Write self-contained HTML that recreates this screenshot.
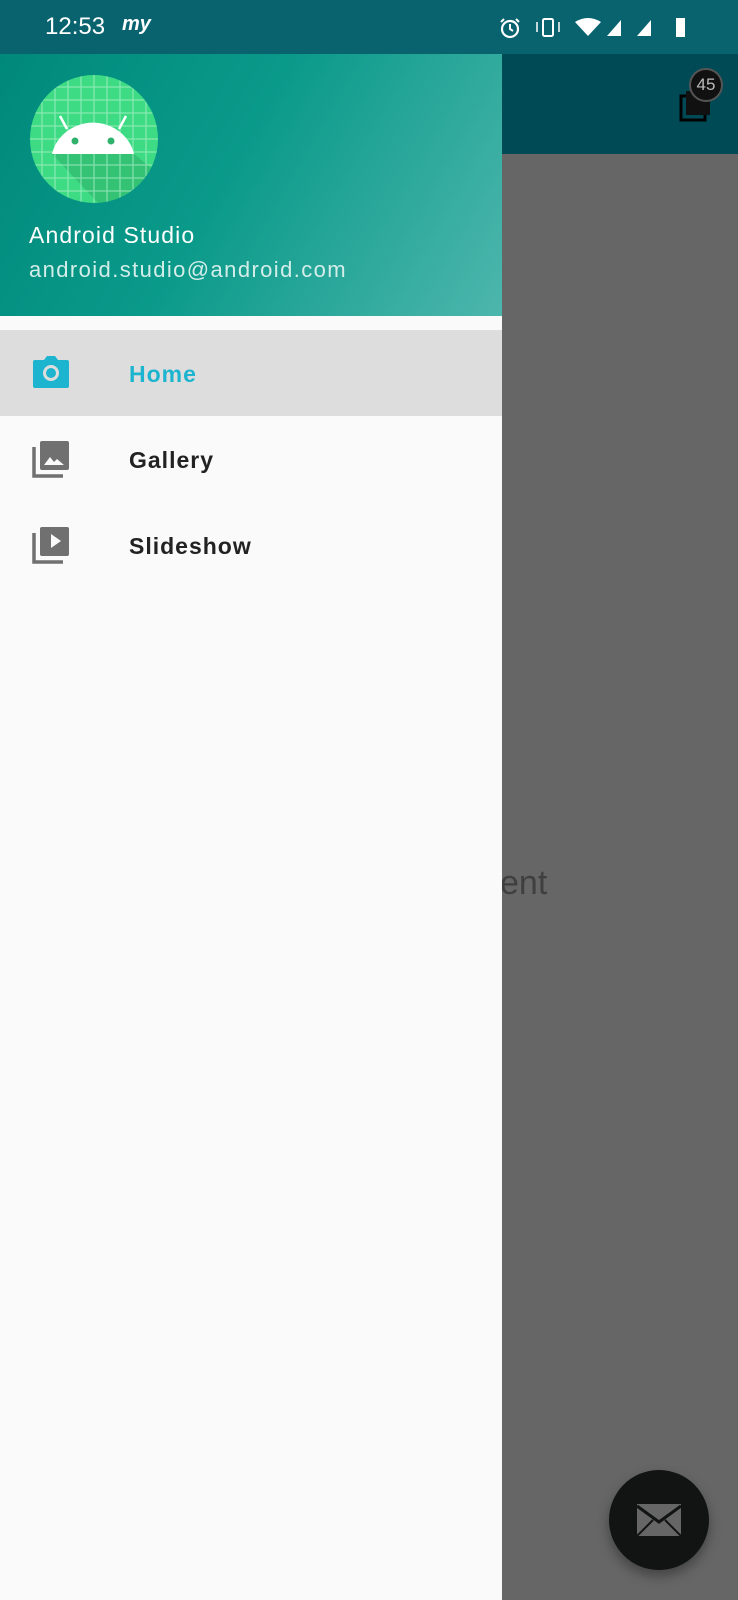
<!DOCTYPE html>
<html><head><meta charset="utf-8"><style>
*{margin:0;padding:0;box-sizing:border-box}
body{width:738px;height:1600px;overflow:hidden;background:#666;font-family:"Liberation Sans",sans-serif;position:relative}
.sb{position:absolute;left:0;top:0;width:738px;height:54px;background:#08636f;color:#fff}
.tb{position:absolute;left:502px;top:54px;width:236px;height:100px;background:#004a55}
.drawer{position:absolute;left:0;top:54px;width:502px;height:1546px;background:#fafafa}
.hd{position:absolute;left:0;top:0;width:502px;height:262px;background:linear-gradient(120deg,#00897b 0%,#0a9a8a 45%,#4db6ac 100%)}
.item{position:absolute;left:0;width:502px;height:86px}
.item span{position:absolute;left:129px;top:31px;font-size:23px;font-weight:bold;color:#222;letter-spacing:1px}
</style></head><body>
<div class="sb">
<div style="position:absolute;left:45px;top:13px;font-size:24px">12:53</div>
<div style="position:absolute;left:122px;top:13px;font-size:20px;font-weight:bold;font-style:italic">my</div>
<svg style="position:absolute;left:495px;top:14px" width="210" height="28" viewBox="0 0 210 28">
<circle cx="15" cy="15" r="8" fill="none" stroke="#fff" stroke-width="2.2"/><path d="M15 10v5l3 2M9 5l-3 3M21 5l3 3" stroke="#fff" stroke-width="2" fill="none"/>
<rect x="48" y="5" width="10" height="17" rx="1.5" fill="none" stroke="#fff" stroke-width="2"/><path d="M42 8v10M64 8v10" stroke="#fff" stroke-width="1.5"/>
<path d="M80 8 Q93 0 106 8 L93 22Z" fill="#fff"/>
<path d="M112 22 L126 22 L126 6Z" fill="#fff"/><path d="M142 22 L156 22 L156 6Z" fill="#fff"/>
<rect x="181" y="4" width="9" height="19" fill="#fff"/>
</svg>
</div>
<div class="tb">
<svg style="position:absolute;left:174px;top:32px" width="40" height="40" viewBox="0 0 40 40"><rect x="5" y="10" width="24" height="24" fill="none" stroke="#000" stroke-width="3"/><rect x="10" y="5" width="24" height="24" fill="#111"/></svg>
<div style="position:absolute;left:187px;top:14px;width:34px;height:34px;border-radius:50%;background:#111;border:2px solid #555;color:#bbb;font-size:17px;text-align:center;line-height:30px">45</div>
</div>
<div style="position:absolute;left:500px;top:864px;font-size:34px;color:#3f3f3f">ent</div>
<div style="position:absolute;left:609px;top:1470px;width:100px;height:100px;border-radius:50%;background:#121414;box-shadow:0 6px 12px rgba(0,0,0,.35)">
<svg style="position:absolute;left:28px;top:34px" width="44" height="32" viewBox="0 0 44 32"><rect width="44" height="32" fill="#666"/><path d="M0 2 L22 18 L44 2" stroke="#121414" stroke-width="3" fill="none"/><path d="M0 32 L16 16 M44 32 L28 16" stroke="#121414" stroke-width="2"/></svg>
</div>
<div class="drawer">
<div class="hd">
<svg style="position:absolute;left:29px;top:20px" width="130" height="130" viewBox="0 0 130 130">
<defs><clipPath id="c"><circle cx="65" cy="65" r="64"/></clipPath></defs>
<circle cx="65" cy="65" r="64" fill="#3ddc84"/>
<g clip-path="url(#c)"><path d="M23 80 L70 130 L130 130 L130 100 L105 80Z" fill="#2fb26b" opacity=".6"/>
<g stroke="#a8f0c6" stroke-width="1.2" opacity=".7">
<path d="M0 13H130M0 26H130M0 39H130M0 52H130M0 65H130M0 78H130M0 91H130M0 104H130M0 117H130M13 0V130M26 0V130M39 0V130M52 0V130M65 0V130M78 0V130M91 0V130M104 0V130M117 0V130"/></g></g>
<path d="M23 80 A42 40 0 0 1 105 80Z" fill="#fff"/>
<path d="M38 55 L31 42 M90 55 L97 42" stroke="#fff" stroke-width="2.5"/>
<circle cx="46" cy="67" r="3.5" fill="#2fb26b"/><circle cx="82" cy="67" r="3.5" fill="#2fb26b"/>
</svg>
<div style="position:absolute;left:29px;top:168px;font-size:23px;color:#fff;letter-spacing:1.1px">Android Studio</div>
<div style="position:absolute;left:29px;top:203px;font-size:22px;color:#d3ede9;letter-spacing:1.4px">android.studio@android.com</div>
</div>
<div class="item" style="top:276px;background:#dddddd">
<svg style="position:absolute;left:32px;top:24px" width="38" height="36" viewBox="0 0 38 36"><path d="M3 6h9l3-4h8l3 4h9a2 2 0 0 1 2 2v24a2 2 0 0 1-2 2H3a2 2 0 0 1-2-2V8a2 2 0 0 1 2-2z" fill="#1cb4cf"/><circle cx="19" cy="19" r="6.5" fill="none" stroke="#ddd" stroke-width="3"/></svg>
<span style="color:#1cb4cf">Home</span></div>
<div class="item" style="top:362px">
<svg style="position:absolute;left:32px;top:24px" width="38" height="38" viewBox="0 0 38 38"><path d="M2 7v29h29" stroke="#707070" stroke-width="3.5" fill="none"/><rect x="8" y="1" width="29" height="29" rx="2" fill="#707070"/><path d="M12 25l6-8 4 5 3-3 7 6z" fill="#fafafa"/></svg>
<span>Gallery</span></div>
<div class="item" style="top:448px">
<svg style="position:absolute;left:32px;top:24px" width="38" height="38" viewBox="0 0 38 38"><path d="M2 7v29h29" stroke="#707070" stroke-width="3.5" fill="none"/><rect x="8" y="1" width="29" height="29" rx="2" fill="#707070"/><path d="M19 8v14l10-7z" fill="#fafafa"/></svg>
<span>Slideshow</span></div>
</div>
</body></html>
